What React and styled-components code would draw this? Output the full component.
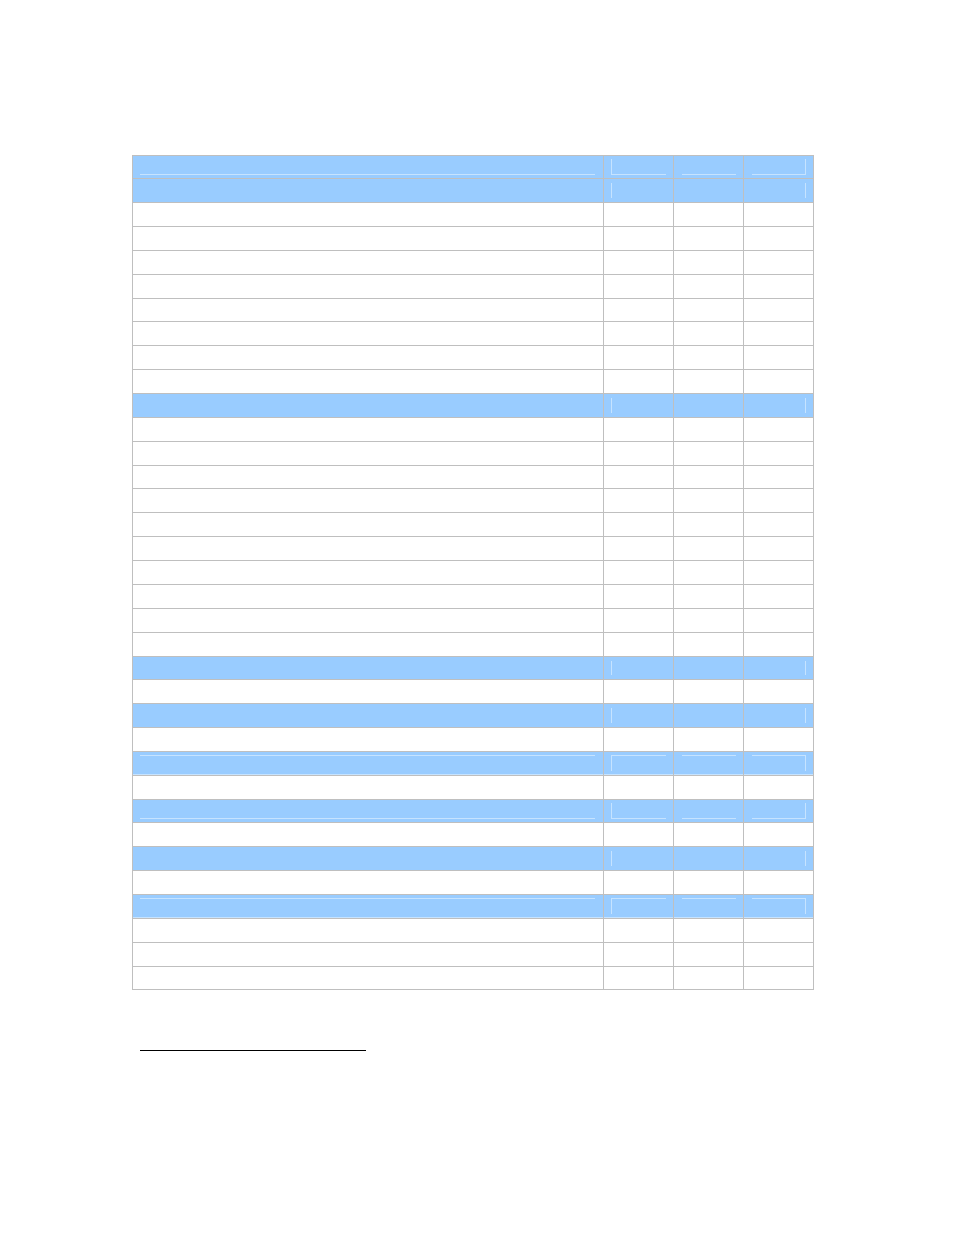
import React from "react";
import styled, { createGlobalStyle, css } from "styled-components";

const Global = createGlobalStyle`
  html, body { margin: 0; padding: 0; background: #ffffff; }
  body { font-family: "Liberation Sans", Arial, sans-serif; }
  * { box-sizing: border-box; }
`;

const GRID = "#bfbfbf";
const BLUE = "#99ccff";
const LIGHT = "#c6e3ff";

const Page = styled.div`
  width: 954px;
  min-height: 1235px;
  padding: 155px 0 0 132px;
`;

const Table = styled.div`
  width: 682px;
  display: flex;
  flex-direction: column;
  border-right: 1px solid ${GRID};
  border-bottom: 1px solid ${GRID};
`;

const Row = styled.div`
  display: grid;
  grid-template-columns: 471px 70px 70px 70px;
  height: ${(p) => p.$h}px;
  background: ${(p) => (p.$blue ? BLUE : "#ffffff")};
  ${(p) =>
    p.$shade &&
    css`
      box-shadow: inset 0 -1px 0 ${LIGHT};
    `}
`;

const Cell = styled.div`
  display: flex;
  border-top: 1px solid ${GRID};
  border-left: 1px solid ${GRID};
  padding: ${(p) => p.$pad};
`;

const Inner = styled.div`
  flex: 1;
  border-style: solid;
  border-color: ${LIGHT};
  border-width: ${(p) =>
    `${p.$t ? 1 : 0}px ${p.$r ? 1 : 0}px ${p.$b ? 1 : 0}px ${p.$l ? 1 : 0}px`};
`;

const FootRule = styled.div`
  width: 226px;
  margin: 60px 0 0 8px;
  border-top: 1px solid #000000;
`;

const H_PAD = [
  [7, 8],
  [7, 7],
  [8, 7],
  [8, 7],
];

const V_PAD = {
  bottomBox: [3, 3],
  sides: [4, 4],
  topBox: [3, 4],
  w: [0, 0],
};

const EDGES = {
  bottomBox: [{ b: 1 }, { l: 1, b: 1 }, { b: 1 }, { b: 1, r: 1 }],
  sides: [{}, { l: 1 }, {}, { r: 1 }],
  topBox: [{ t: 1 }, { t: 1, l: 1 }, { t: 1 }, { t: 1, r: 1 }],
  w: [{}, {}, {}, {}],
};

const rows = [
  "bottomBox",
  "sides",
  ...Array(8).fill("w"),
  "sides",
  ...Array(10).fill("w"),
  "sides",
  "w",
  "sides",
  "w",
  "topBox",
  "w",
  "bottomBox",
  "w",
  "sides",
  "w",
  "topBox",
  "w",
  "w",
  "w",
];

const SHORT = new Set([0, 6, 13, 21, 27, 34]);

export default function App() {
  return (
    <>
      <Global />
      <Page>
        <Table>
          {rows.map((type, i) => {
            const [vt, vb] = V_PAD[type];
            return (
              <Row
                key={i}
                $h={SHORT.has(i) ? 23 : 24}
                $blue={type !== "w"}
                $shade={type === "topBox"}
              >
                {H_PAD.map(([pl, pr], c) => {
                  const e = EDGES[type][c];
                  return (
                    <Cell key={c} $pad={`${vt}px ${pr}px ${vb}px ${pl}px`}>
                      {type !== "w" && (
                        <Inner $t={e.t} $r={e.r} $b={e.b} $l={e.l} />
                      )}
                    </Cell>
                  );
                })}
              </Row>
            );
          })}
        </Table>
        <FootRule />
      </Page>
    </>
  );
}
